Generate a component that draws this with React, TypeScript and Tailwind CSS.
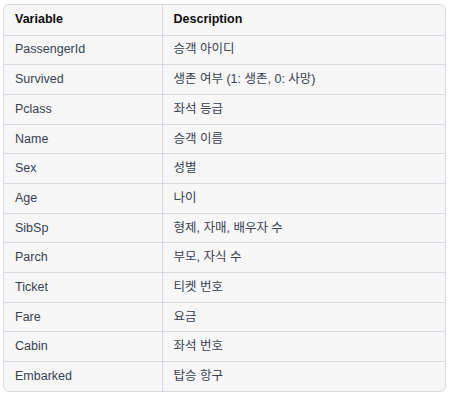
const rows: [string, string][] = [
  ['PassengerId', '승객 아이디'],
  ['Survived', '생존 여부 (1: 생존, 0: 사망)'],
  ['Pclass', '좌석 등급'],
  ['Name', '승객 이름'],
  ['Sex', '성별'],
  ['Age', '나이'],
  ['SibSp', '형제, 자매, 배우자 수'],
  ['Parch', '부모, 자식 수'],
  ['Ticket', '티켓 번호'],
  ['Fare', '요금'],
  ['Cabin', '좌석 번호'],
  ['Embarked', '탑승 항구'],
]

export default function App() {
  return (
    <div className="w-[452px] h-[398px] bg-white pt-[4px] pl-[3px] font-['Liberation_Sans','Noto_Sans_CJK_KR',sans-serif] text-[12.5px]">
      <div className="w-[443px] bg-[#f7f7f8] border border-[#d9d9e3] rounded-[6px] overflow-hidden">
        <table className="w-full border-collapse">
          <thead>
            <tr className="h-[30px] border-b border-[#d9d9e3]">
              <th className="w-[158px] text-left font-bold text-[#0d0d0d] pl-[11px] border-r border-[#d9d9e3]">Variable</th>
              <th className="text-left font-bold text-[#0d0d0d] pl-[11px]">Description</th>
            </tr>
          </thead>
          <tbody>
            {rows.map(([v, d], i) => (
              <tr key={v} className={`h-[29.7px] ${i < rows.length - 1 ? 'border-b border-[#d9d9e3]' : ''}`}>
                <td className="pl-[11px] text-[#374151] border-r border-[#d9d9e3]">{v}</td>
                <td className="pl-[11px] text-[#374151]">{d}</td>
              </tr>
            ))}
          </tbody>
        </table>
      </div>
    </div>
  )
}
